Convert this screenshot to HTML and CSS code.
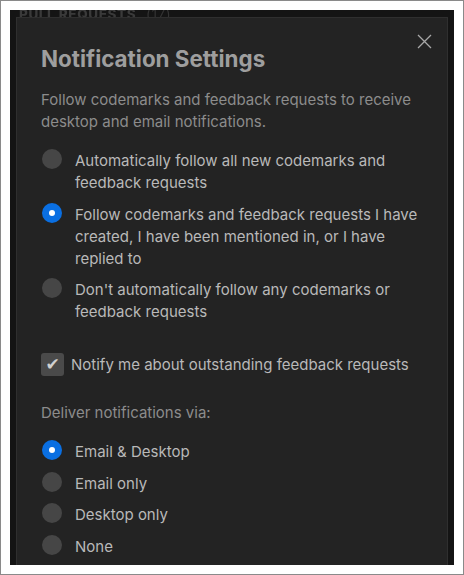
FILE: index.html
```html
<!DOCTYPE html>
<html>
<head>
<meta charset="utf-8">
<link rel="stylesheet" href="styles.css">
</head>
<body>
<div class="frame">
  <div class="backdrop">
    <div class="behind"><span class="behind-text">PULL REQUESTS <span class="count">(17)</span></span></div>
    <div class="modal">
      <button class="close" aria-label="Close">
        <svg width="15" height="15" viewBox="0 0 15 15"><path d="M1 1 L14 14 M14 1 L1 14" stroke="#a8a8a8" stroke-width="1.3" fill="none"/></svg>
      </button>
      <h1 class="title">Notification Settings</h1>
      <p class="desc">Follow codemarks and feedback requests to receive desktop and email notifications.</p>
      <div class="group">
        <label class="option"><span class="radio"></span><span class="label">Automatically follow all new codemarks and feedback requests</span></label>
        <label class="option"><span class="radio on"></span><span class="label">Follow codemarks and feedback requests I have created, I have been mentioned in, or I have replied to</span></label>
        <label class="option"><span class="radio"></span><span class="label">Don't automatically follow any codemarks or feedback requests</span></label>
      </div>
      <label class="check"><span class="box">✔</span><span class="label">Notify me about outstanding feedback requests</span></label>
      <p class="desc via">Deliver notifications via:</p>
      <div class="group tight">
        <label class="option"><span class="radio on"></span><span class="label">Email &amp; Desktop</span></label>
        <label class="option"><span class="radio"></span><span class="label">Email only</span></label>
        <label class="option"><span class="radio"></span><span class="label">Desktop only</span></label>
        <label class="option"><span class="radio"></span><span class="label">None</span></label>
      </div>
    </div>
  </div>
</div>
</body>
</html>
```
FILE: styles.css
```css
* { box-sizing: border-box; }
html, body { margin: 0; padding: 0; background: #fff; }
body { font-family: Inter, "Noto Sans", sans-serif; }

.frame {
  width: 464px;
  height: 575px;
  border: 1px solid #8a8a8a;
  padding: 9px;
  background: #fff;
}

.backdrop {
  height: 555px;
  background: #141414;
  overflow: hidden;
  padding: 0 6px;
}

.behind {
  height: 7px;
  display: flex;
  align-items: flex-end;
  padding-left: 3px;
}
.behind-text {
  font-size: 13.5px;
  font-weight: 800;
  line-height: 13px;
  color: #3a3a3a;
  letter-spacing: 0.6px;
  filter: blur(0.4px);
  transform: translateY(4px);
}
.behind-text .count { font-weight: 400; margin-left: 6px; color: #333; }

.modal {
  position: relative;
  background: #232323;
  border: 1px solid #2f2f2f;
  height: 600px;
  padding: 24px 24px 0 24px;
}

.close {
  position: absolute;
  top: 16px;
  right: 15px;
  width: 15px;
  height: 15px;
  padding: 0;
  border: 0;
  background: none;
  display: block;
}
.close svg { display: block; }

.title {
  margin: 0;
  font-size: 22.4px;
  font-weight: 700;
  line-height: 33px;
  color: #9e9e9e;
}

.desc {
  margin: 14px 0 0 0;
  font-size: 15px;
  line-height: 22px;
  color: #8c8c8c;
}

.group {
  display: flex;
  flex-direction: column;
  gap: 9.5px;
  margin-top: 17px;
}

.option {
  display: flex;
  align-items: flex-start;
  gap: 13px;
  font-size: 15px;
  line-height: 22px;
  color: #b9b9b9;
}

.radio {
  flex: none;
  width: 20px;
  height: 20px;
  border-radius: 50%;
  background: #464646;
  margin: -1px 0 0 1px;
  display: flex;
  align-items: center;
  justify-content: center;
}
.radio.on { background: #0a6fe2; }
.radio.on::after {
  content: "";
  width: 6px;
  height: 6px;
  border-radius: 50%;
  background: #fff;
}

.check {
  display: flex;
  align-items: center;
  gap: 7px;
  margin-top: 30px;
  font-size: 15px;
  line-height: 22px;
  color: #b9b9b9;
}
.box {
  flex: none;
  width: 23px;
  height: 23px;
  border-radius: 3px;
  background: #4a4a4a;
  color: #d0d0d0;
  font-size: 17px;
  line-height: 23px;
  text-align: center;
  font-family: "DejaVu Sans", sans-serif;
}

.via { margin-top: 26px; }

.group.tight { gap: 9.7px; margin-top: 17px; }
```
